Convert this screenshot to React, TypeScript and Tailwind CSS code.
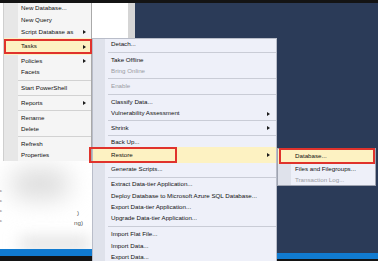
import React from 'react'

type Row = {
  label?: string
  h: string
  arrow?: boolean
  disabled?: boolean
  hl?: boolean
  sep?: boolean
}

const leftItems: Row[] = [
  { label: 'New Database...', h: 'h-[11px]' },
  { label: 'New Query', h: 'h-[12px]' },
  { label: 'Script Database as', h: 'h-[12px]', arrow: true },
  { label: 'Tasks', h: 'h-[17px]', arrow: true, hl: true },
  { label: 'Policies', h: 'h-[12px]', arrow: true },
  { label: 'Facets', h: 'h-[11px]' },
  { sep: true, h: 'h-[4px]' },
  { label: 'Start PowerShell', h: 'h-[12px]' },
  { sep: true, h: 'h-[3px]' },
  { label: 'Reports', h: 'h-[12px]', arrow: true },
  { sep: true, h: 'h-[3px]' },
  { label: 'Rename', h: 'h-[12px]' },
  { label: 'Delete', h: 'h-[10px]' },
  { sep: true, h: 'h-[5px]' },
  { label: 'Refresh', h: 'h-[11px]' },
  { label: 'Properties', h: 'h-[11px]' },
]

const taskItems: Row[] = [
  { label: 'Detach...', h: 'h-[11px]' },
  { sep: true, h: 'h-[4px]' },
  { label: 'Take Offline', h: 'h-[12px]' },
  { label: 'Bring Online', h: 'h-[10px]', disabled: true },
  { sep: true, h: 'h-[5px]' },
  { label: 'Enable', h: 'h-[11px]', disabled: true },
  { sep: true, h: 'h-[4px]' },
  { label: 'Classify Data...', h: 'h-[12px]' },
  { label: 'Vulnerability Assessment', h: 'h-[11px]', arrow: true },
  { sep: true, h: 'h-[3px]' },
  { label: 'Shrink', h: 'h-[12px]', arrow: true },
  { sep: true, h: 'h-[3px]' },
  { label: 'Back Up...', h: 'h-[10px]' },
  { label: 'Restore', h: 'h-[16px]', arrow: true, hl: true },
  { label: 'Generate Scripts...', h: 'h-[13px]' },
  { sep: true, h: 'h-[3px]' },
  { label: 'Extract Data-tier Application...', h: 'h-[11px]' },
  { label: 'Deploy Database to Microsoft Azure SQL Database...', h: 'h-[12px]' },
  { label: 'Export Data-tier Application...', h: 'h-[11px]' },
  { label: 'Upgrade Data-tier Application...', h: 'h-[11px]' },
  { sep: true, h: 'h-[5px]' },
  { label: 'Import Flat File...', h: 'h-[11px]' },
  { label: 'Import Data...', h: 'h-[12px]' },
  { label: 'Export Data...', h: 'h-[11px]' },
]

export default function App() {
  return (
    <div className="relative w-[378px] h-[261px] overflow-hidden bg-[#141414] font-['Liberation_Sans',Arial,sans-serif] text-[6.2px] leading-none text-[#111]">
      {/* window behind the menus */}
      <div className="flex h-full pt-[3px]">
        <div className="flex flex-col w-[128px]">
          <div className="relative flex-1 bg-white overflow-hidden">
            <div className="absolute left-[10px] top-[166px] w-[60px] h-[30px] rounded-full bg-[#dcdcdc] blur-md" />
            <div className="absolute left-[20px] top-[236px] w-[70px] h-[10px] bg-[#d6d6d6] blur-sm" />
            <span className="absolute left-[77px] top-[207px] text-[#555]">)</span>
            <span className="absolute left-[74px] top-[217px] text-[#555]">ng)</span>
            <div className="absolute left-0 top-[186px] flex flex-col gap-[6px] text-[4px] text-[#444]">
              <span>c</span>
              <span>c</span>
              <span>c</span>
              <span>c</span>
            </div>
          </div>
          <div className="h-[7px] bg-[#117bd0]" />
          <div className="h-[5px]" />
        </div>
        <div className="w-[7px] bg-[#d5d5d5] h-[247px]" />
        <div className="flex flex-col flex-1">
          <div className="flex-1 bg-[#2b3b58]" />
          <div className="h-[6px] bg-[#117bd0]" />
          <div className="h-[2px]" />
        </div>
      </div>

      {/* object context menu */}
      <div className="absolute left-[3px] top-[3px] w-[89px] flex flex-col bg-[#f5f5f5] border-l border-l-[#cfcfcf] border-r border-r-[#a9a9a9]">
        {leftItems.map((r, i) =>
          r.sep ? (
            <div key={i} className={`flex items-center ${r.h}`}>
              <div className="w-[14px] h-full bg-[#e7e7e7]" />
              <div className="flex-1 h-px bg-[#d2d2d2]" />
            </div>
          ) : (
            <div key={i} className={`relative flex items-center ${r.h} ${r.hl ? 'bg-[#fdf2c2]' : ''}`}>
              <div className={`w-[14px] h-full ${r.hl ? '' : 'bg-[#e7e7e7]'}`} />
              <span className="pl-[3px]">{r.label}</span>
              {r.arrow && <span className="ml-auto mr-[5px] w-0 h-0 border-y-[2.5px] border-y-transparent border-l-[3px] border-l-[#1b1b1b]" />}
              {r.hl && <div className="absolute left-0 right-[-1px] top-[1px] bottom-[1px] border-2 border-[#e0332c]" />}
            </div>
          )
        )}
      </div>

      {/* Tasks submenu */}
      <div className="absolute left-[92px] top-[38px] w-[185px] flex flex-col bg-[#eef0f9] border border-[#b9bdc9]">
        {taskItems.map((r, i) =>
          r.sep ? (
            <div key={i} className={`flex items-center ${r.h}`}>
              <div className="w-[12px] h-full bg-[#dfe2eb]" />
              <div className="ml-[3px] flex-1 h-px bg-[#c9ccd6]" />
            </div>
          ) : (
            <div key={i} className={`relative flex items-center ${r.h} ${r.hl ? 'bg-[#fdf2c2]' : ''}`}>
              <div className={`w-[12px] h-full ${r.hl ? '' : 'bg-[#dfe2eb]'}`} />
              <span className={`pl-[6px] ${r.disabled ? 'text-[#9a9ca3]' : ''}`}>{r.label}</span>
              {r.arrow && <span className="ml-auto mr-[6px] w-0 h-0 border-y-[2.5px] border-y-transparent border-l-[3px] border-l-[#1b1b1b]" />}
              {r.hl && <div className="absolute left-[-4px] w-[88px] top-0 bottom-0 border-2 border-[#e0332c]" />}
            </div>
          )
        )}
      </div>

      {/* Restore submenu */}
      <div className="absolute left-[277px] top-[148px] w-[99px] h-[38px] flex flex-col bg-[#eef0f9] border border-[#9ea3b0]">
        <div className="relative flex items-center h-[15px] bg-[#fdf2c2]">
          <div className="w-[13px] h-full" />
          <span className="pl-[4px]">Database...</span>
          <div className="absolute left-[1px] right-0 top-[-1px] bottom-0 border-2 border-[#e0332c]" />
        </div>
        <div className="flex items-center h-[11px]">
          <div className="w-[13px] h-full bg-[#dfe2eb]" />
          <span className="pl-[4px]">Files and Filegroups...</span>
        </div>
        <div className="flex items-center h-[10px]">
          <div className="w-[13px] h-full bg-[#dfe2eb]" />
          <span className="pl-[4px] text-[#9a9ca3]">Transaction Log...</span>
        </div>
      </div>
    </div>
  )
}
